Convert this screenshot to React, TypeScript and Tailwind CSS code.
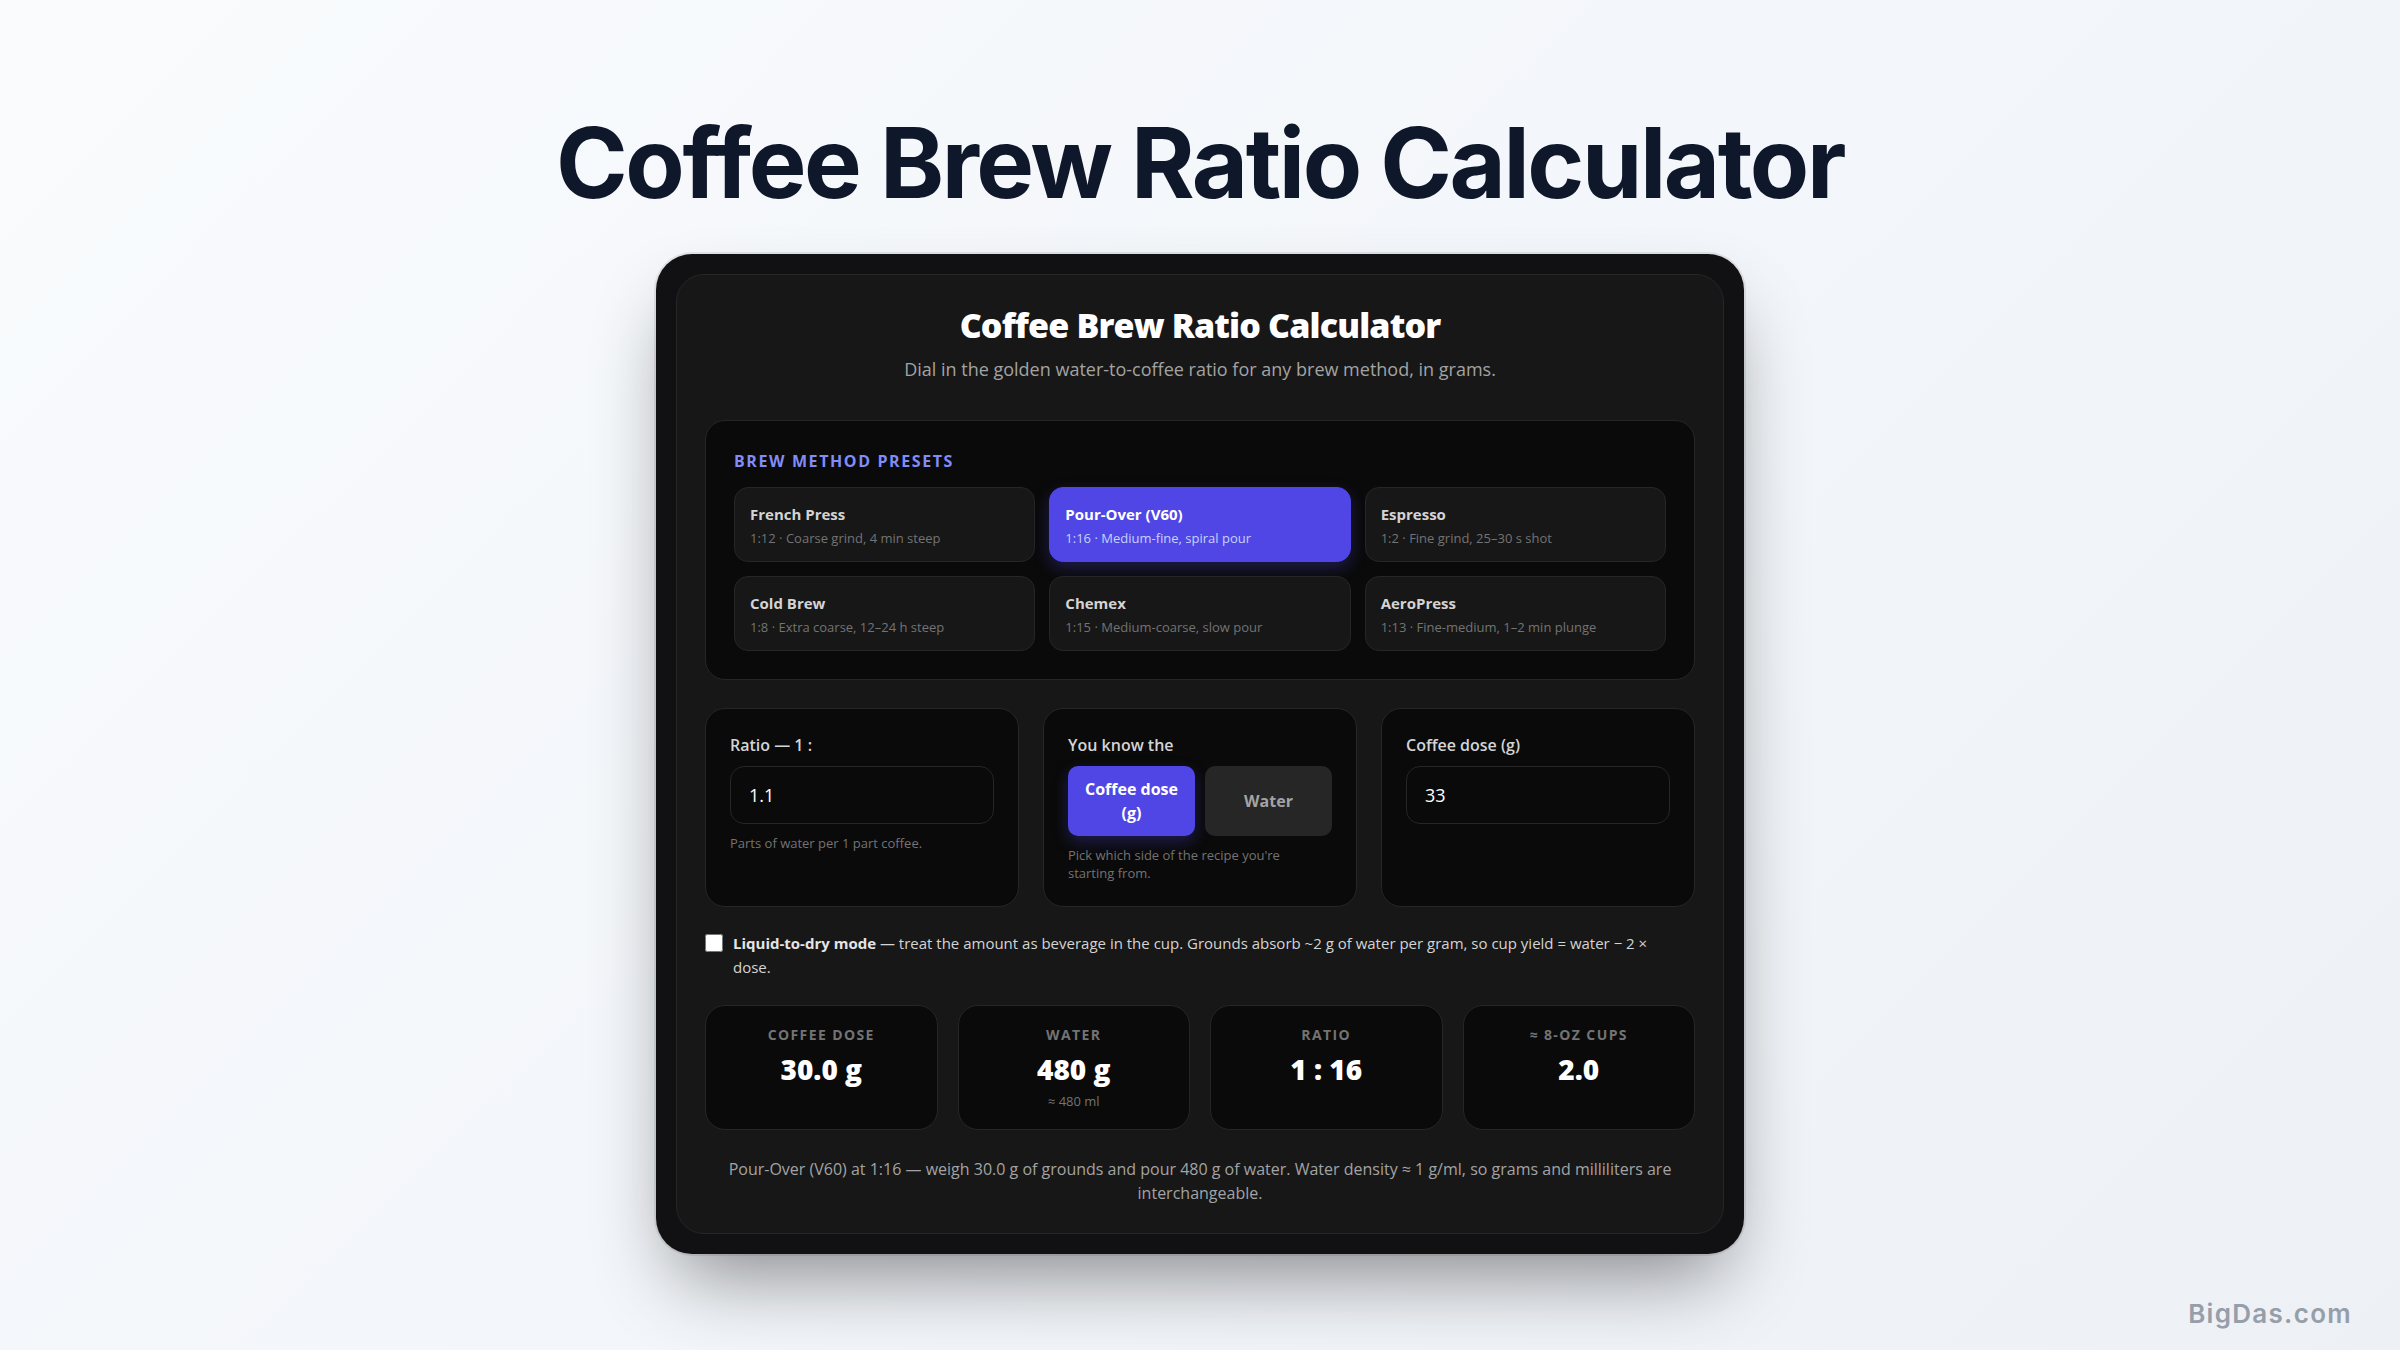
import React, { useState } from 'react';

interface Preset {
  name: string;
  ratio: number;
  note: string;
}

interface Stat {
  label: string;
  value: string;
  sub?: string;
}

const PRESETS: Preset[] = [
  { name: 'French Press', ratio: 12, note: 'Coarse grind, 4 min steep' },
  { name: 'Pour-Over (V60)', ratio: 16, note: 'Medium-fine, spiral pour' },
  { name: 'Espresso', ratio: 2, note: 'Fine grind, 25–30 s shot' },
  { name: 'Cold Brew', ratio: 8, note: 'Extra coarse, 12–24 h steep' },
  { name: 'Chemex', ratio: 15, note: 'Medium-coarse, slow pour' },
  { name: 'AeroPress', ratio: 13, note: 'Fine-medium, 1–2 min plunge' },
];

const STATS: Stat[] = [
  { label: 'Coffee dose', value: '30.0 g' },
  { label: 'Water', value: '480 g', sub: '≈ 480 ml' },
  { label: 'Ratio', value: '1 : 16' },
  { label: '≈ 8-oz cups', value: '2.0' },
];

const PresetButton: React.FC<{ preset: Preset; active: boolean; onClick: () => void }> = ({ preset, active, onClick }) => (
  <button
    type="button"
    aria-pressed={active}
    onClick={onClick}
    className={`rounded-[14px] border px-[15px] py-3 text-left ${
      active
        ? 'border-[#4f46e5] bg-[#4f46e5] text-white shadow-[0_6px_16px_rgba(79,70,229,0.3)]'
        : 'border-[#262626] bg-[#171717] text-[#d4d4d4]'
    }`}
  >
    <span className="block text-[15px] leading-[28px] font-bold">{preset.name}</span>
    <span className={`block text-[13px] leading-[21px] ${active ? 'text-[#c7d2fe]' : 'text-[#737373]'}`}>
      1:{preset.ratio} · {preset.note}
    </span>
  </button>
);

const Field: React.FC<{ children: React.ReactNode }> = ({ children }) => (
  <div className="rounded-[20px] border border-[#262626] bg-[#0a0a0a] p-6">{children}</div>
);

const labelClass = 'mb-[9px] block text-base leading-6 font-semibold text-[#d4d4d4]';
const inputClass =
  'block h-[58px] w-full rounded-[14px] border border-[#262626] bg-[#0a0a0a] px-[18px] text-[18px] text-white outline-none';
const hintClass = 'mt-[10px] pr-4 text-[13px] leading-[18px] text-[#737373]';

const App: React.FC = () => {
  const [selected, setSelected] = useState('Pour-Over (V60)');
  const [ratio, setRatio] = useState('1.1');
  const [dose, setDose] = useState('33');
  const [known, setKnown] = useState<'dose' | 'water'>('dose');
  const [liquid, setLiquid] = useState(false);

  const toggleClass = (on: boolean) =>
    `rounded-[10px] px-3 py-[11px] text-base leading-6 font-bold ${
      on ? 'bg-[#4f46e5] text-white shadow-[0_6px_16px_rgba(79,70,229,0.3)]' : 'bg-[#262626] text-[#a3a3a3]'
    }`;

  return (
    <div className="relative flex min-h-screen flex-col items-center bg-linear-135 from-[#f9fbfd] via-[#f3f6fa] to-[#edf0f5] px-6 pt-[98px] pb-12 font-['Open_Sans',sans-serif]">
      <h1 className="text-center font-['Inter',sans-serif] text-[97px] leading-[130px] font-bold tracking-tight text-[#0f172a]">
        Coffee Brew Ratio Calculator
      </h1>

      <main className="mt-[26px] w-full max-w-[1088px] rounded-[36px] bg-[#111113] p-5 shadow-[0_0_0_2px_rgba(0,0,0,0.08),0_40px_80px_-20px_rgba(0,0,0,0.45)]">
        <div className="rounded-[28px] border border-[#262626] bg-[#171717] p-7">
          <header className="mb-[37px] text-center">
            <h2 className="text-[34px] leading-[44px] font-extrabold tracking-tight text-white">Coffee Brew Ratio Calculator</h2>
            <p className="mt-2 text-[18px] leading-7 text-[#a3a3a3]">
              Dial in the golden water-to-coffee ratio for any brew method, in grams.
            </p>
          </header>

          {/* Presets */}
          <section className="rounded-[20px] border border-[#262626] bg-[#0a0a0a] p-7">
            <h3 className="mb-[14px] text-base leading-6 font-bold tracking-widest text-[#818cf8] uppercase">Brew method presets</h3>
            <div className="grid grid-cols-3 gap-[14px]">
              {PRESETS.map((p) => (
                <PresetButton key={p.name} preset={p} active={p.name === selected} onClick={() => setSelected(p.name)} />
              ))}
            </div>
          </section>

          {/* Inputs */}
          <section className="mt-7 grid grid-cols-3 gap-6">
            <Field>
              <label htmlFor="ratio" className={labelClass}>Ratio — 1 :</label>
              <input id="ratio" className={inputClass} inputMode="decimal" value={ratio} onChange={(e) => setRatio(e.target.value)} />
              <p className={hintClass}>Parts of water per 1 part coffee.</p>
            </Field>
            <Field>
              <div id="known-label" className={labelClass}>You know the</div>
              <div role="group" aria-labelledby="known-label" className="grid grid-cols-2 gap-[10px]">
                <button type="button" className={toggleClass(known === 'dose')} onClick={() => setKnown('dose')}>
                  Coffee dose (g)
                </button>
                <button type="button" className={toggleClass(known === 'water')} onClick={() => setKnown('water')}>
                  Water
                </button>
              </div>
              <p className={hintClass}>Pick which side of the recipe you're starting from.</p>
            </Field>
            <Field>
              <label htmlFor="dose" className={labelClass}>Coffee dose (g)</label>
              <input id="dose" className={inputClass} inputMode="decimal" value={dose} onChange={(e) => setDose(e.target.value)} />
            </Field>
          </section>

          <div className="mt-6 flex items-start gap-[10px] pr-4 text-[15px] leading-6 text-[#d4d4d4]">
            <input
              id="liquid"
              type="checkbox"
              checked={liquid}
              onChange={(e) => setLiquid(e.target.checked)}
              className="mt-[3px] size-[18px] shrink-0"
            />
            <label htmlFor="liquid">
              <strong className="font-bold text-[#e5e5e5]">Liquid-to-dry mode</strong> — treat the amount as beverage in the cup.
              Grounds absorb ~2 g of water per gram, so cup yield = water − 2 × dose.
            </label>
          </div>

          {/* Results */}
          <section className="mt-[26px] grid grid-cols-4 gap-5">
            {STATS.map((s) => (
              <div key={s.label} className="rounded-[20px] border border-[#262626] bg-[#0a0a0a] px-4 py-[18px] text-center">
                <div className="text-[14px] leading-[22px] font-bold tracking-widest text-[#737373] uppercase">{s.label}</div>
                <div className="mt-1 text-[28px] leading-[38px] font-extrabold text-white">{s.value}</div>
                {s.sub && <div className="mt-1 text-[13px] leading-[19px] text-[#737373]">{s.sub}</div>}
              </div>
            ))}
          </section>

          <p className="mt-[27px] text-center text-base leading-6 text-[#a3a3a3]">
            Pour-Over (V60) at 1:16 — weigh 30.0 g of grounds and pour 480 g of water. Water density ≈ 1 g/ml, so grams and
            milliliters are interchangeable.
          </p>
        </div>
      </main>

      <div className="absolute right-12 bottom-[18px] font-['Inter',sans-serif] text-[26px] leading-9 font-semibold tracking-wider text-[#969ea9]">
        BigDas.com
      </div>
    </div>
  );
};

export default App;
